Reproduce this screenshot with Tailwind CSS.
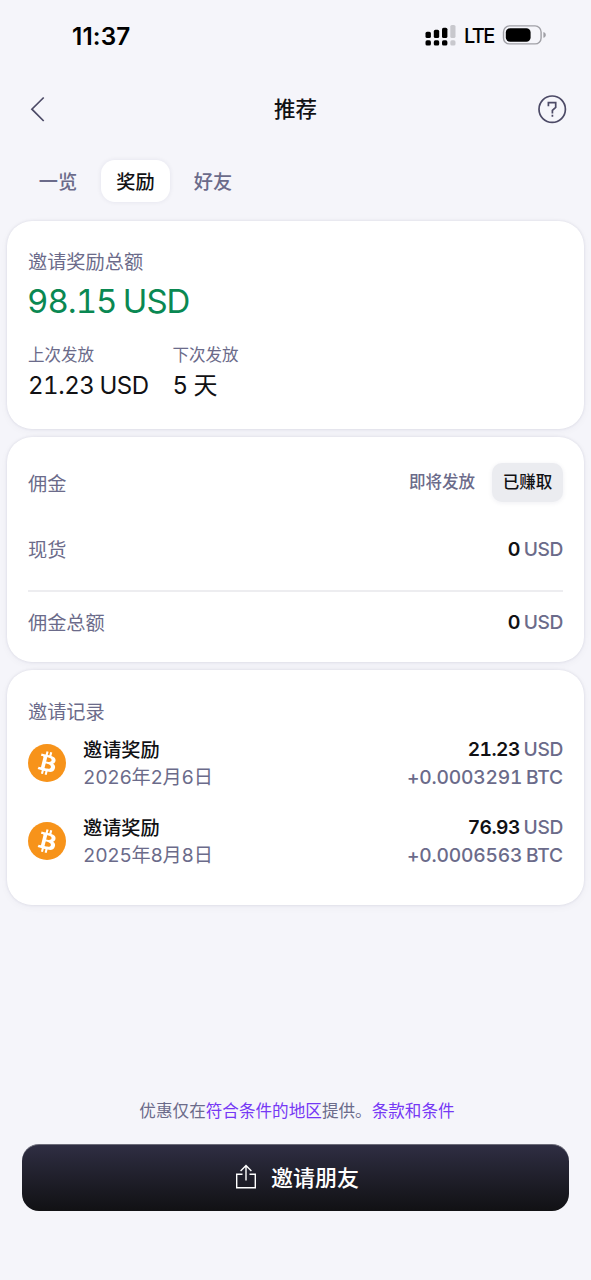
<!DOCTYPE html>
<html lang="zh-CN">
<head>
<meta charset="utf-8">
<title>推荐</title>
<script src="https://cdn.jsdelivr.net/npm/@tailwindcss/browser@4"></script>
</head>
<body class="flex h-[1280px] w-[591px] flex-col overflow-hidden bg-[#f5f5fa] font-['Inter','Noto_Sans_CJK_SC',sans-serif] text-[19.2px] text-[#6b6b8a]">
  <header class="flex h-[72px] items-center justify-between pr-[44px] pl-[72px] text-black">
    <span class="text-[24.3px] leading-none font-semibold tracking-[0.15px]">11:37</span>
    <div class="flex items-center">
      <svg class="h-[22px] w-[31px]" viewBox="0 0 31 22">
        <g fill="#000"><rect x="0.5" y="6.8" width="5.4" height="6.2" rx="1.6"/><rect x="8.8" y="4.8" width="5.4" height="8.2" rx="1.6"/><rect x="17" y="2.7" width="5.4" height="10.3" rx="1.6"/><rect x="0.5" y="15.3" width="5.4" height="5.2" rx="1.6"/><rect x="8.8" y="15.3" width="5.4" height="5.2" rx="1.6"/><rect x="17" y="15.3" width="5.4" height="5.2" rx="1.6"/></g>
        <g fill="#c8c8cd"><rect x="25.3" y="0" width="5.2" height="13" rx="1.6"/><rect x="25.3" y="15.3" width="5.2" height="5.2" rx="1.6"/></g>
      </svg>
      <span class="ml-[8px] w-[31px] text-[20px] leading-none font-medium tracking-[-1.6px]">LTE</span>
      <svg class="ml-[7px] h-[22px] w-[45px]" viewBox="0 0 45 22">
        <rect x="1.5" y="0.9" width="37.6" height="18" rx="6" fill="none" stroke="#a0a0a6" stroke-width="1.4"/>
        <rect x="3.8" y="3.2" width="24.8" height="13.6" rx="4.2" fill="#000"/>
        <path d="M41.4 7c1.5.5 2.4 1.5 2.4 2.9s-.9 2.4-2.4 2.9z" fill="#a0a0a6"/>
      </svg>
    </div>
  </header>

  <nav class="flex h-[74px] items-center justify-between pr-[24px] pl-[29px]">
    <svg class="h-[26px] w-[29px]" viewBox="0 0 29 26" fill="none" stroke="#4c4a66" stroke-width="1.7"><path d="M14.7 1.5L2.9 13.2L14.7 25"/></svg>
    <h1 class="pr-[4px] pt-px text-[21.5px] font-medium text-[#111114]">推荐</h1>
    <svg class="h-[30px] w-[30px]" viewBox="0 0 30 30" fill="none" stroke="#4c4a66" stroke-width="1.7"><circle cx="15.2" cy="15.2" r="13.2"/><path d="M11.4 12.3V8.7H18.7V13.4L15.4 16.4V19.4M15.4 20.8V22.7"/></svg>
  </nav>

  <div class="flex h-[75px] items-start pt-[14px] pl-[23px] font-medium">
    <span class="flex h-[42px] w-[70px] items-center justify-center pt-[2px]">一览</span>
    <span class="ml-[8px] flex h-[42px] w-[69px] items-center justify-center rounded-[14px] bg-white pt-[2px] text-[#111114] shadow-[0_0_5px_rgba(30,30,80,0.08)]">奖励</span>
    <span class="ml-[8px] flex h-[42px] w-[70px] items-center justify-center pt-[2px]">好友</span>
  </div>

  <main class="flex flex-col gap-[8px] px-[7px]">
    <section class="h-[208px] rounded-[25px] bg-white px-[21px] pt-[27px] shadow-[0_0_3px_rgba(30,30,80,0.12),0_2px_8px_rgba(30,30,80,0.04)]">
      <p class="h-[28px] leading-[28px]">邀请奖励总额</p>
      <p class="-ml-px h-[50px] text-[33px] leading-[50px] tracking-[-1px] text-[#0a8852] tabular-nums [word-spacing:-1.5px]">98.15 USD</p>
      <div class="flex pt-[16px]">
        <div class="w-[144.5px]">
          <p class="h-[26px] text-[16.5px] leading-[26px]">上次发放</p>
          <p class="h-[34px] text-[24px] leading-[35px] tracking-[-0.45px] whitespace-nowrap text-[#111114] tabular-nums [word-spacing:-1px]">21.23 USD</p>
        </div>
        <div>
          <p class="h-[26px] text-[16.5px] leading-[26px]">下次发放</p>
          <p class="h-[34px] text-[24px] leading-[35px] tracking-[-0.45px] text-[#111114] tabular-nums">5 天</p>
        </div>
      </div>
    </section>

    <section class="h-[225px] rounded-[25px] bg-white px-[21px] pt-[26px] shadow-[0_0_3px_rgba(30,30,80,0.12),0_2px_8px_rgba(30,30,80,0.04)]">
      <div class="flex h-[39px] items-center">
        <span class="pt-[3px]">佣金</span>
        <span class="ml-auto text-[16.5px] font-medium">即将发放</span>
        <span class="ml-[17px] flex h-[39px] w-[71px] items-center justify-center rounded-[10px] bg-[#ebecf0] text-[16.5px] font-medium text-[#111114] shadow-[0_1px_5px_rgba(30,30,80,0.07)]">已赚取</span>
      </div>
      <div class="flex h-[90px] items-center justify-between border-b-[2px] border-[#ededf0] pt-[6px]">
        <span class="pt-[2px]">现货</span>
        <span class="font-medium tracking-[-0.4px] [word-spacing:-1px]"><b class="font-semibold text-[#111114]">0</b> USD</span>
      </div>
      <div class="flex h-[61px] items-center justify-between">
        <span class="pt-[2px]">佣金总额</span>
        <span class="font-medium tracking-[-0.4px] [word-spacing:-1px]"><b class="font-semibold text-[#111114]">0</b> USD</span>
      </div>
    </section>

    <section class="h-[235px] rounded-[25px] bg-white px-[21px] pt-[28px] shadow-[0_0_3px_rgba(30,30,80,0.12),0_2px_8px_rgba(30,30,80,0.04)]">
      <h2 class="h-[28px] leading-[28px]">邀请记录</h2>
      <div class="flex h-[77.5px] items-start pt-[10px]">
        <svg class="mt-[8px] h-[38px] w-[38px]" viewBox="0 0 32 32"><circle cx="16" cy="16" r="16" fill="#f7931a"/><path fill="#fff" d="M23.19 14.02c.31-2.1-1.28-3.22-3.47-3.98l.71-2.84-1.73-.43-.69 2.77-1.38-.33.69-2.78-1.72-.43-.71 2.84-1.1-.26-2.39-.6-.46 1.85s1.28.3 1.26.31c.7.18.83.64.8 1.01l-1.98 7.91c-.08.22-.3.54-.78.42.02.03-1.26-.31-1.26-.31l-.86 1.98 2.25.56 1.24.32-.72 2.87 1.73.43.71-2.84 1.38.36-.71 2.83 1.73.43.72-2.87c2.95.56 5.17.33 6.1-2.34.75-2.14-.04-3.38-1.58-4.19 1.13-.26 1.97-1 2.2-2.53zm-3.95 5.54c-.54 2.15-4.15.99-5.32.7l.95-3.81c1.17.29 4.93.87 4.37 3.11zm.54-5.57c-.49 1.96-3.49.96-4.47.72l.86-3.45c.98.24 4.12.69 3.61 2.73z"/></svg>
        <div class="ml-[17px] flex flex-col">
          <span class="h-[28px] leading-[28px] font-medium text-[#111114]">邀请奖励</span>
          <span class="h-[28px] leading-[27px] tracking-[-0.3px] tabular-nums">2026年2月6日</span>
        </div>
        <div class="ml-auto flex flex-col text-right font-medium tracking-[-0.35px] tabular-nums [word-spacing:-1px]">
          <span class="h-[28px] leading-[27px]"><b class="font-semibold tracking-[-0.55px] text-[#111114]">21.23</b> USD</span>
          <span class="h-[28px] leading-[27px] tracking-[-0.2px]">+0.0003291 BTC</span>
        </div>
      </div>
      <div class="flex h-[77.5px] items-start pt-[10px]">
        <svg class="mt-[8px] h-[38px] w-[38px]" viewBox="0 0 32 32"><circle cx="16" cy="16" r="16" fill="#f7931a"/><path fill="#fff" d="M23.19 14.02c.31-2.1-1.28-3.22-3.47-3.98l.71-2.84-1.73-.43-.69 2.77-1.38-.33.69-2.78-1.72-.43-.71 2.84-1.1-.26-2.39-.6-.46 1.85s1.28.3 1.26.31c.7.18.83.64.8 1.01l-1.98 7.91c-.08.22-.3.54-.78.42.02.03-1.26-.31-1.26-.31l-.86 1.98 2.25.56 1.24.32-.72 2.87 1.73.43.71-2.84 1.38.36-.71 2.83 1.73.43.72-2.87c2.95.56 5.17.33 6.1-2.34.75-2.14-.04-3.38-1.58-4.19 1.13-.26 1.97-1 2.2-2.53zm-3.95 5.54c-.54 2.15-4.15.99-5.32.7l.95-3.81c1.17.29 4.93.87 4.37 3.11zm.54-5.57c-.49 1.96-3.49.96-4.47.72l.86-3.45c.98.24 4.12.69 3.61 2.73z"/></svg>
        <div class="ml-[17px] flex flex-col">
          <span class="h-[28px] leading-[28px] font-medium text-[#111114]">邀请奖励</span>
          <span class="h-[28px] leading-[27px] tracking-[-0.3px] tabular-nums">2025年8月8日</span>
        </div>
        <div class="ml-auto flex flex-col text-right font-medium tracking-[-0.35px] tabular-nums [word-spacing:-1px]">
          <span class="h-[28px] leading-[27px]"><b class="font-semibold tracking-[-0.55px] text-[#111114]">76.93</b> USD</span>
          <span class="h-[28px] leading-[27px] tracking-[-0.2px]">+0.0006563 BTC</span>
        </div>
      </div>
    </section>
  </main>

  <footer class="mt-auto flex flex-col px-[22px] pb-[69px]">
    <p class="mb-[19px] h-[28px] pl-[3px] text-center text-[16.6px] leading-[28px]">优惠仅在<a class="text-[#7538f5]">符合条件的地区</a>提供。<a class="text-[#7538f5]">条款和条件</a></p>
    <button class="flex h-[67px] items-center justify-center rounded-[17px] border-t border-[#6c6c79] bg-linear-to-b from-[#2f2e43] to-[#111114] pl-[3px] text-[22px] font-medium text-white">
      <svg class="mr-[14px] mb-[2px] h-[26px] w-[22px]" viewBox="0 0 22 26" fill="none" stroke="#fff" stroke-width="1.4"><path d="M7.5 10.2H1.7V23.8H20.3V10.2H14.5M11 16.5V1.8M5.6 7L11 1.6L16.4 7"/></svg>邀请朋友</button>
  </footer>
</body>
</html>
